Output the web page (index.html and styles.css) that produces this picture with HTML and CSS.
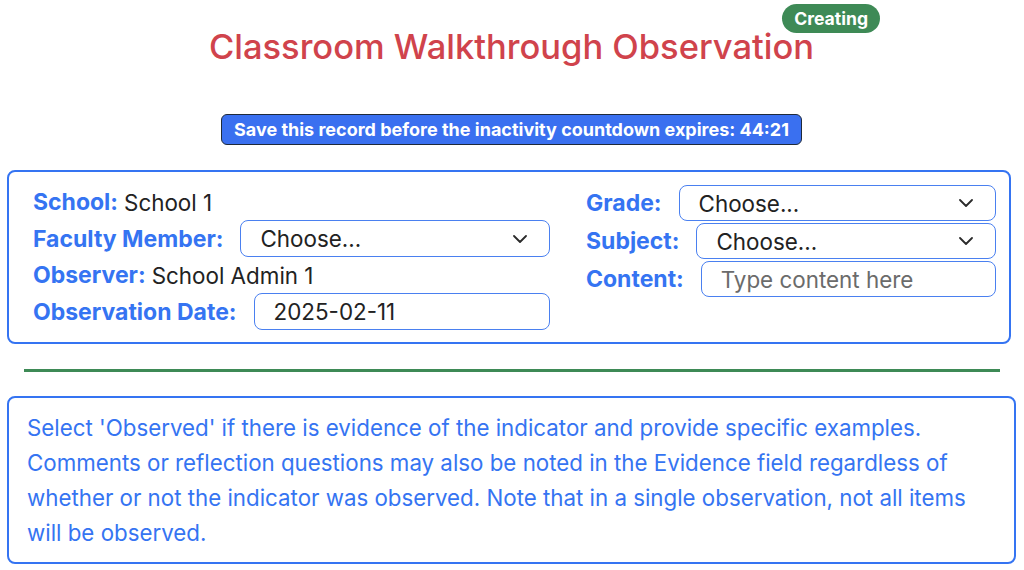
FILE: index.html
```html
<!DOCTYPE html>
<html lang="en">
<head>
<meta charset="utf-8">
<title>Classroom Walkthrough Observation</title>
<link rel="stylesheet" href="styles.css">
</head>
<body>
<header class="page-head">
  <h1 class="title">Classroom Walkthrough Observation<span class="badge">Creating</span></h1>
  <div class="countdown-wrap">
    <div class="countdown">Save this record before the inactivity countdown expires: 44:21</div>
  </div>
</header>

<section class="card details">
  <div class="col col-left">
    <div class="row text-row"><span class="lbl">School:</span> <span class="val">School 1</span></div>
    <div class="row field-row">
      <label class="lbl" for="faculty">Faculty Member:</label>
      <div class="select-wrap">
        <select id="faculty" class="ctrl"><option>Choose...</option></select>
        <svg class="chev" viewBox="0 0 14 8" width="14" height="8"><path d="M1 1l6 6 6-6" fill="none" stroke="#2b2b2b" stroke-width="1.8" stroke-linecap="round" stroke-linejoin="round"/></svg>
      </div>
    </div>
    <div class="row text-row"><span class="lbl">Observer:</span> <span class="val">School Admin 1</span></div>
    <div class="row field-row">
      <label class="lbl" for="odate">Observation Date:</label>
      <input id="odate" class="ctrl" type="text" value="2025-02-11">
    </div>
  </div>
  <div class="col col-right">
    <div class="row field-row tight">
      <label class="lbl" for="grade">Grade:</label>
      <div class="select-wrap">
        <select id="grade" class="ctrl"><option>Choose...</option></select>
        <svg class="chev" viewBox="0 0 14 8" width="14" height="8"><path d="M1 1l6 6 6-6" fill="none" stroke="#2b2b2b" stroke-width="1.8" stroke-linecap="round" stroke-linejoin="round"/></svg>
      </div>
    </div>
    <div class="row field-row tight">
      <label class="lbl" for="subject">Subject:</label>
      <div class="select-wrap">
        <select id="subject" class="ctrl"><option>Choose...</option></select>
        <svg class="chev" viewBox="0 0 14 8" width="14" height="8"><path d="M1 1l6 6 6-6" fill="none" stroke="#2b2b2b" stroke-width="1.8" stroke-linecap="round" stroke-linejoin="round"/></svg>
      </div>
    </div>
    <div class="row field-row tight">
      <label class="lbl" for="content">Content:</label>
      <input id="content" class="ctrl" type="text" placeholder="Type content here">
    </div>
  </div>
</section>

<hr class="divider">

<section class="card instructions">
  <p>Select 'Observed' if there is evidence of the indicator and provide specific examples. Comments or reflection questions may also be noted in the Evidence field regardless of whether or not the indicator was observed. Note that in a single observation, not all items will be observed.</p>
</section>
</body>
</html>
```

FILE: styles.css
```css
* { box-sizing: border-box; }

html, body {
  margin: 0;
  padding: 0;
  background: #ffffff;
  font-family: Inter, "Liberation Sans", Arial, sans-serif;
  color: #222222;
}

body {
  padding: 0 8px 0 7px;
}

.page-head {
  text-align: center;
}

.title {
  position: relative;
  display: inline-block;
  margin: 27px 0 0;
  font-size: 34.5px;
  line-height: 40px;
  font-weight: 500;
  color: #d0434c;
}

.badge {
  position: absolute;
  top: -23px;
  right: -66px;
  height: 29px;
  padding: 0 12px;
  border-radius: 15px;
  background: #3e8a56;
  color: #ffffff;
  font-size: 17.6px;
  font-weight: 700;
  line-height: 29px;
}

.countdown-wrap {
  margin-top: 47px;
}

.countdown {
  display: inline-block;
  height: 31px;
  padding: 0 12px;
  border: 1px solid #1f2a3a;
  border-radius: 6px;
  background: #3a70f0;
  color: #ffffff;
  font-size: 18px;
  font-weight: 700;
  line-height: 29px;
}

.card {
  border: 2.5px solid #3574f2;
  border-radius: 8px;
}

.details {
  margin-top: 25px;
  width: 1004px;
  height: 174px;
  padding: 13px 13px 0 24px;
  display: grid;
  grid-template-columns: 517px 410px;
  column-gap: 36px;
}

.col {
  display: flex;
  flex-direction: column;
}

.col-left {
  gap: 1px;
}

.col-right {
  gap: 2px;
}

.row {
  display: flex;
  align-items: center;
}

.text-row {
  height: 34px;
}

.field-row {
  height: 37px;
}

.field-row.tight {
  height: 36px;
}

.lbl {
  font-size: 23px;
  font-weight: 700;
  color: #3574f2;
  white-space: nowrap;
}

.val {
  font-size: 22.4px;
  color: #222222;
  margin-left: 6px;
}

.field-row .lbl {
  margin-right: 17px;
}

.select-wrap {
  position: relative;
  flex: 1;
  height: 100%;
}

.ctrl {
  flex: 1;
  width: 100%;
  height: 100%;
  border: 1.5px solid #4a80f0;
  border-radius: 8px;
  background: #ffffff;
  font-family: inherit;
  font-size: 22.4px;
  color: #222222;
  padding: 0 19px;
  appearance: none;
  -webkit-appearance: none;
  outline: none;
}

.ctrl::placeholder {
  color: #6b6b6b;
}

.chev {
  position: absolute;
  right: 23px;
  top: 50%;
  margin-top: -4px;
  pointer-events: none;
}

.divider {
  margin: 25px 16px 0 17px;
  border: 0;
  height: 3px;
  background: #3e8a56;
}

.instructions {
  margin-top: 24px;
  width: 1009px;
  padding: 12px 18px 12px 18px;
}

.instructions p {
  margin: 0;
  font-size: 22.3px;
  line-height: 35px;
  color: #3574f2;
}
```
